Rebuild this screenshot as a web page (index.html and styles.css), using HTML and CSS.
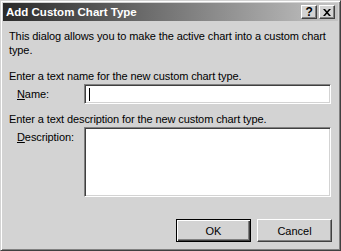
FILE: index.html
```html
<!DOCTYPE html>
<html lang="en">
<head>
    <meta charset="UTF-8">
    <title>Add Custom Chart Type</title>
    <link rel="stylesheet" href="styles.css">
</head>
<body>
    <div class="window">
        <div class="titlebar">
            <span class="title">Add Custom Chart Type</span>
            <div class="title-buttons">
                <span class="tbtn">?</span>
                <span class="tbtn">
                    <svg width="8" height="7" viewBox="0 0 8 7">
                        <path d="M0 0h2l2 2.3L6 0h2L5 3.5 8 7H6L4 4.7 2 7H0l3-3.5z" fill="#000"/>
                    </svg>
                </span>
            </div>
        </div>

        <div class="dialog">
            <p class="intro">This dialog allows you to make the active chart into a custom chart type.</p>

            <p class="prompt">Enter a text name for the new custom chart type.</p>
            <div class="row">
                <label class="row-label"><u>N</u>ame:</label>
                <div class="field name-field"><span class="caret"></span></div>
            </div>

            <p class="prompt prompt-desc">Enter a text description for the new custom chart type.</p>
            <div class="row">
                <label class="row-label"><u>D</u>escription:</label>
                <div class="field desc-field"></div>
            </div>

            <div class="actions">
                <button class="btn default">OK</button>
                <button class="btn">Cancel</button>
            </div>
        </div>
    </div>
</body>
</html>
```

FILE: styles.css
```css
body {
    margin: 0;
    background-color: #d3d3d3;
    font-family: "Liberation Sans", Arial, sans-serif;
    font-size: 11px;
    line-height: 14px;
    letter-spacing: -0.1px;
    color: #000;
}
.window {
    width: 341px;
    height: 251px;
    box-sizing: border-box;
    border: 1px solid;
    border-color: #d3d3d3 #404040 #404040 #d3d3d3;
    box-shadow: inset 1px 1px #fff, inset -1px -1px #808080;
    padding: 2px;
    background-color: #d3d3d3;
}
.titlebar {
    height: 18px;
    display: flex;
    align-items: center;
    justify-content: space-between;
    padding: 0 3px 0 3px;
    background: linear-gradient(to right, #2a2a2a, #c4c4c4);
}
.title {
    color: #fff;
    font-weight: bold;
    font-size: 11.5px;
    letter-spacing: 0;
}
.title-buttons {
    display: flex;
    gap: 2px;
}
.tbtn {
    width: 16px;
    height: 14px;
    box-sizing: border-box;
    display: flex;
    align-items: center;
    justify-content: center;
    background-color: #d3d3d3;
    border: 1px solid;
    border-color: #fff #404040 #404040 #fff;
    box-shadow: inset -1px -1px #808080;
    font-size: 12px;
    font-weight: bold;
    line-height: 12px;
}
.dialog {
    padding: 8px 7px 0 6px;
}
p {
    margin: 0;
}
.prompt {
    margin-top: 12px;
}
.prompt-desc {
    margin-top: 8px;
}
.row {
    display: flex;
    margin-top: 1px;
}
.row-label {
    width: 67px;
    padding-left: 8px;
    padding-top: 3px;
    flex-shrink: 0;
}
.field {
    flex-grow: 1;
    height: 20px;
    box-sizing: border-box;
    background-color: #fff;
    border: 1px solid;
    border-color: #808080 #fff #fff #808080;
    box-shadow: inset 1px 1px #404040, inset -1px -1px #d3d3d3;
    padding: 3px 4px;
}
.caret {
    display: block;
    width: 1px;
    height: 13px;
    background-color: #000;
}
.desc-field {
    height: 70px;
}
.actions {
    display: flex;
    justify-content: flex-end;
    gap: 6px;
    margin-top: 22px;
    margin-right: -1px;
}
.btn {
    width: 75px;
    height: 23px;
    box-sizing: border-box;
    font-family: inherit;
    font-size: 11px;
    background-color: #d3d3d3;
    border: 1px solid;
    border-color: #fff #404040 #404040 #fff;
    box-shadow: inset -1px -1px #808080;
    padding: 0;
    color: #000;
}
.default {
    border: 1px solid #000;
    box-shadow: inset 1px 1px #fff, inset -1px -1px #404040, inset -2px -2px #808080;
}
```
